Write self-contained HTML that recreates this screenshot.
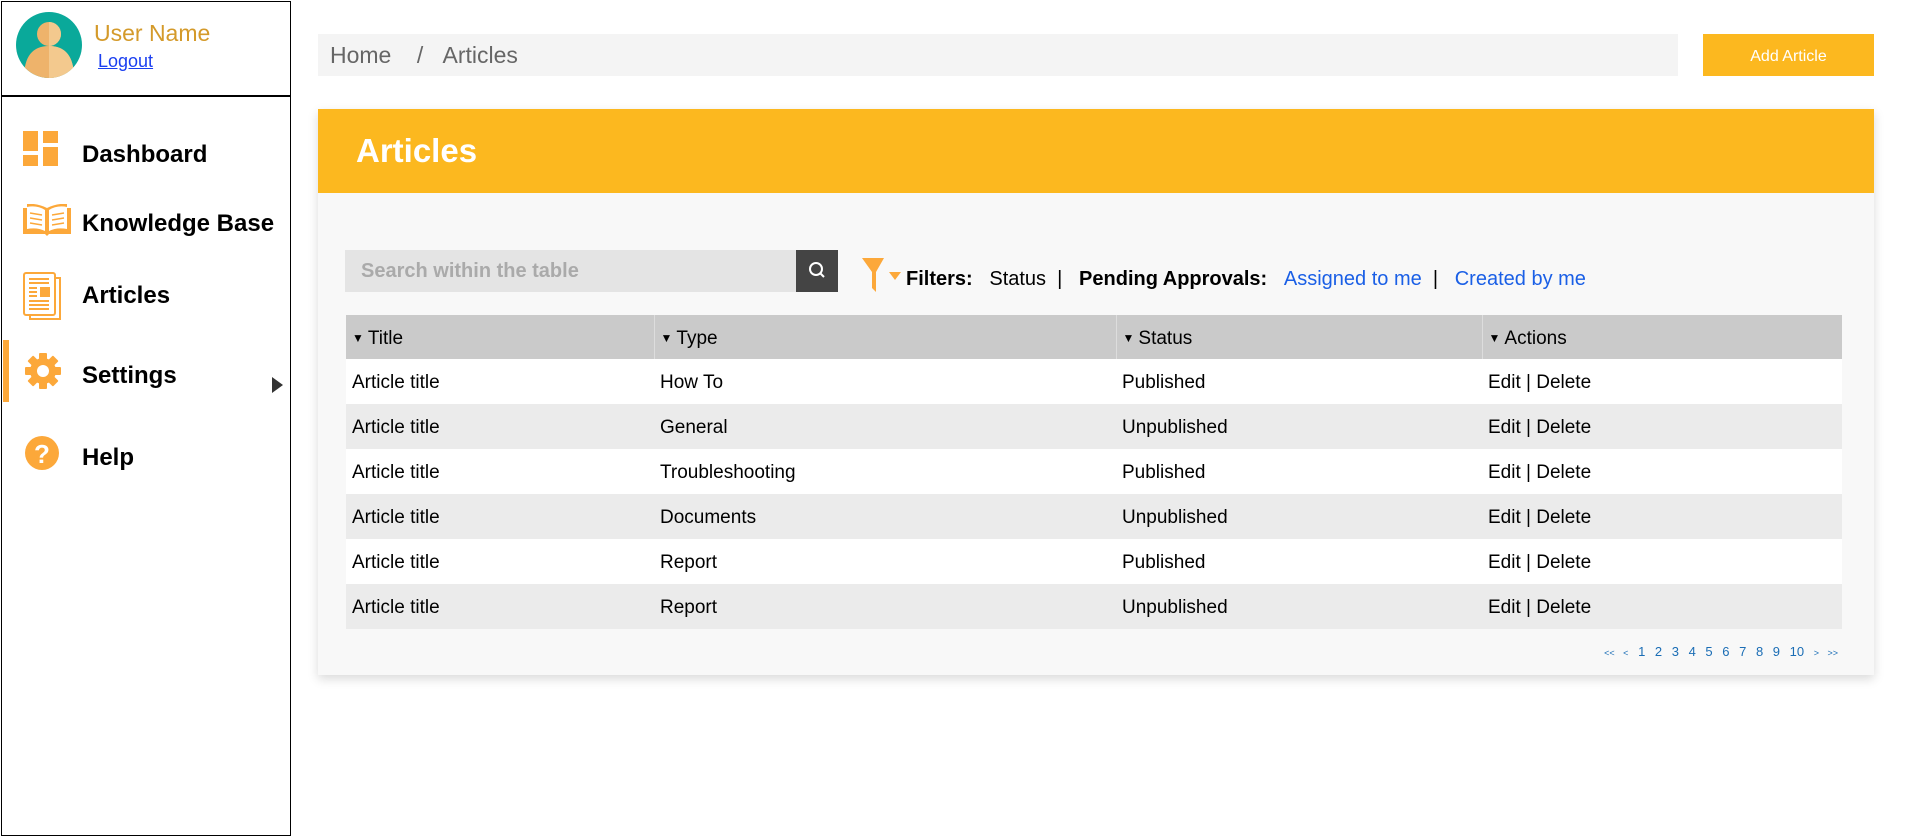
<!DOCTYPE html>
<html><head><meta charset="utf-8"><style>
*{box-sizing:border-box;margin:0;padding:0}
body{width:1920px;height:830px;background:#fff;font-family:"Liberation Sans",Arial,sans-serif;position:relative;overflow:hidden}
.abs{position:absolute}
.side{left:1px;top:1px;width:290px;height:835px;border:1px solid #000}
.hdrline{left:1px;top:95px;width:290px;height:2px;background:#000}
.nav{left:82px;font-weight:bold;font-size:24px;color:#000}
.bc{left:318px;top:34px;width:1360px;height:42px;background:#f4f4f4;color:#666;font-size:23px;line-height:42px;padding-left:12px}
.btn{left:1703px;top:34px;width:171px;height:42px;background:#fcb81f;color:#fff;font-size:16px;text-align:center;line-height:46px}
.panel{left:318px;top:109px;width:1556px;height:566px;background:#f8f8f8;box-shadow:0 4px 10px rgba(0,0,0,.15)}
.ph{left:318px;top:109px;width:1556px;height:84px;background:#fcb81f;color:#fff;font-weight:bold;font-size:33px;padding-left:38px;line-height:84px}
.search{left:345px;top:250px;width:451px;height:42px;background:#e4e4e4;color:#aaa;font-weight:bold;font-size:20px;line-height:42px;padding-left:16px}
.sbtn{left:796px;top:250px;width:42px;height:42px;background:#444}
.filt{left:906px;top:268px;font-size:20px;color:#000;white-space:nowrap}
.filt b{font-weight:bold}
.filt a{color:#1a5fe6;text-decoration:none}
table{position:absolute;left:346px;top:315px;width:1496px;border-collapse:collapse;font-size:19px}
td{height:45px;padding-left:6px;color:#000;padding-top:3px}
th{height:44px;background:#cacaca;font-weight:normal;text-align:left;padding-left:6px;border-left:1px solid #ddd;padding-top:3px}
th:first-child{border-left:none}
tr.g td{background:#ebebeb}
tr.w td{background:#fff}
.tri{font-size:12px;vertical-align:2px;margin-right:4px}
.pg{right:82px;top:644px;font-size:13px;color:#1a6db5;word-spacing:6px;white-space:nowrap}
</style></head><body>
<div class="abs side"></div>
<div class="abs hdrline"></div>
<svg class="abs" style="left:16px;top:12px" width="66" height="66" viewBox="0 0 66 66">
<defs><clipPath id="c"><circle cx="33" cy="33" r="33"/></clipPath></defs>
<circle cx="33" cy="33" r="33" fill="#0aa99a"/>
<g clip-path="url(#c)"><circle cx="33" cy="22" r="12" fill="#eeb36b"/><path d="M8 66 Q8 34 33 34 Q58 34 58 66Z" fill="#eeb36b"/><path d="M33 10 A12 12 0 0 1 33 34 Z M33 34 Q58 34 58 66 L33 66Z" fill="#f3c98e"/></g>
</svg>
<div class="abs" style="left:94px;top:20px;font-size:23px;color:#d49a2a">User Name</div>
<div class="abs" style="left:98px;top:51px;font-size:18px;color:#1a3ef0;text-decoration:underline">Logout</div>

<svg class="abs" style="left:23px;top:131px" width="36" height="35" viewBox="0 0 36 35"><g fill="#fca83a"><rect x="0" y="0" width="15" height="20"/><rect x="20" y="0" width="15" height="12"/><rect x="0" y="24" width="15" height="11"/><rect x="20" y="16" width="15" height="19"/></g></svg>
<div class="abs nav" style="top:141px">Dashboard</div>
<svg class="abs" style="left:23px;top:204px" width="48" height="32" viewBox="0 0 48 32"><path d="M0 4 L0 30 L22 30 L24 32 L26 30 L48 30 L48 4 L44 4 L44 0 Q34 -1 24 4 Q14 -1 4 0 L4 4Z" fill="#fca83a"/><path d="M4 3 Q14 1 22 6 L22 27 Q14 23 4 25Z M26 6 Q34 1 44 3 L44 25 Q34 23 26 27Z" fill="#fff"/><g stroke="#fca83a" stroke-width="1.5"><path d="M7 9 L19 11 M7 14 L19 16 M7 19 L19 21 M29 11 L41 9 M29 16 L41 14 M29 21 L41 19"/></g></svg>
<div class="abs nav" style="top:210px">Knowledge Base</div>
<svg class="abs" style="left:23px;top:272px" width="40" height="48" viewBox="0 0 40 48"><g fill="none" stroke="#fca83a" stroke-width="2"><rect x="1" y="1" width="31" height="42" rx="2"/><path d="M32 6 L37 6 L37 47 L7 47 L7 43"/><path d="M6 7 H26 M6 11 H26 M6 16 H14 M6 20 H14 M6 24 H14 M6 29 H26 M6 33 H26 M6 37 H26"/></g><rect x="17" y="15" width="10" height="10" fill="#fca83a"/></svg>
<div class="abs nav" style="top:282px">Articles</div>
<div class="abs" style="left:3px;top:340px;width:6px;height:62px;background:#fca83a"></div>
<svg class="abs" style="left:25px;top:353px" width="36" height="36" viewBox="0 0 36 36"><g fill="#fca83a"><circle cx="18" cy="18" r="13"/><g id="t"><rect x="14" y="0" width="8" height="36" rx="1"/></g><use href="#t" transform="rotate(45 18 18)"/><use href="#t" transform="rotate(90 18 18)"/><use href="#t" transform="rotate(135 18 18)"/></g><circle cx="18" cy="18" r="6" fill="#fff"/></svg>
<div class="abs nav" style="top:362px">Settings</div>
<svg class="abs" style="left:272px;top:377px" width="12" height="16"><path d="M0 0 L11 8 L0 16Z" fill="#333"/></svg>
<svg class="abs" style="left:25px;top:436px" width="34" height="34" viewBox="0 0 34 34"><circle cx="17" cy="17" r="17" fill="#fca83a"/><text x="17" y="27" text-anchor="middle" font-family="Liberation Sans" font-weight="bold" font-size="26" fill="#fff">?</text></svg>
<div class="abs nav" style="top:444px">Help</div>

<div class="abs bc">Home &nbsp;&nbsp;&nbsp;/ &nbsp;&nbsp;Articles</div>
<div class="abs btn">Add Article</div>
<div class="abs panel"></div>
<div class="abs ph">Articles</div>
<div class="abs search">Search within the table</div>
<div class="abs sbtn"><svg width="42" height="42"><circle cx="20" cy="19" r="6" fill="none" stroke="#fff" stroke-width="2"/><path d="M24 23 L28 27" stroke="#fff" stroke-width="2"/></svg></div>
<svg class="abs" style="left:862px;top:258px" width="42" height="34" viewBox="0 0 42 34"><path d="M0 0 H22 L14 14 L14 34 L10 30 L10 14Z" fill="#fca83a"/><path d="M27 14 H39 L33 22Z" fill="#fca83a"/></svg>
<div class="abs filt"><b>Filters:</b> &nbsp;&nbsp;Status&nbsp; | &nbsp;&nbsp;<b>Pending Approvals:</b> &nbsp;&nbsp;<a>Assigned to me</a>&nbsp; | &nbsp;&nbsp;<a>Created by me</a></div>
<table>
<tr><th style="width:308px"><span class="tri">▼</span>Title</th><th style="width:462px"><span class="tri">▼</span>Type</th><th style="width:366px"><span class="tri">▼</span>Status</th><th><span class="tri">▼</span>Actions</th></tr>
<tr class="w"><td>Article title</td><td>How To</td><td>Published</td><td>Edit | Delete</td></tr>
<tr class="g"><td>Article title</td><td>General</td><td>Unpublished</td><td>Edit | Delete</td></tr>
<tr class="w"><td>Article title</td><td>Troubleshooting</td><td>Published</td><td>Edit | Delete</td></tr>
<tr class="g"><td>Article title</td><td>Documents</td><td>Unpublished</td><td>Edit | Delete</td></tr>
<tr class="w"><td>Article title</td><td>Report</td><td>Published</td><td>Edit | Delete</td></tr>
<tr class="g"><td>Article title</td><td>Report</td><td>Unpublished</td><td>Edit | Delete</td></tr>
</table>
<div class="abs pg"><span style="font-size:9px">&lt;&lt; &lt;</span> 1 2 3 4 5 6 7 8 9 10 <span style="font-size:9px">&gt; &gt;&gt;</span></div>
</body></html>
